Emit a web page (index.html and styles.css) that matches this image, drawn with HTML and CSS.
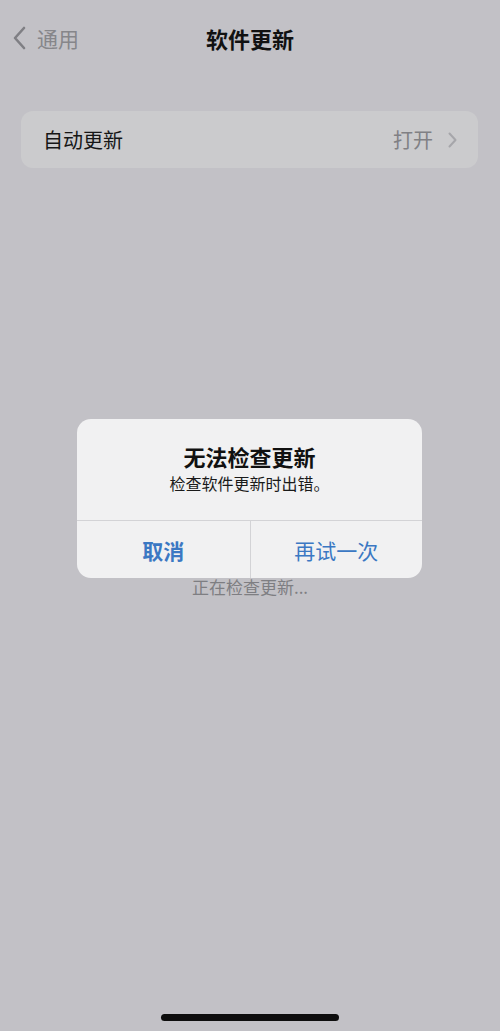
FILE: index.html
```html
<!DOCTYPE html>
<html lang="zh-CN">
<head>
<meta charset="utf-8">
<link rel="stylesheet" href="styles.css">
</head>
<body>
<div class="screen">
  <header class="nav">
    <div class="back">
      <svg class="chev" width="14" height="24" viewBox="0 0 14 24"><path d="M12 2 L3 12 L12 22" fill="none" stroke="#7f7f84" stroke-width="2.6" stroke-linecap="round" stroke-linejoin="round"/></svg>
      <span class="back-text">通用</span>
    </div>
    <div class="title">软件更新</div>
  </header>
  <div class="group">
    <div class="row">
      <span class="row-label">自动更新</span>
      <span class="row-value">打开
        <svg width="9" height="16" viewBox="0 0 9 16"><path d="M1.5 1.5 L7.5 8 L1.5 14.5" fill="none" stroke="#a6a6aa" stroke-width="2" stroke-linecap="round" stroke-linejoin="round"/></svg>
      </span>
    </div>
  </div>
  <div class="status">正在检查更新...</div>
  <div class="alert">
    <div class="alert-body">
      <div class="alert-title">无法检查更新</div>
      <div class="alert-msg">检查软件更新时出错。</div>
    </div>
    <div class="alert-actions">
      <div class="btn">取消</div>
      <div class="btn">再试一次</div>
    </div>
  </div>
  <div class="home"></div>
</div>
</body>
</html>
```
FILE: styles.css
```css
html, body {
  margin: 0;
  padding: 0;
}
body {
  background: #c2c1c6;
  font-family: "Noto Sans CJK SC", "Noto Sans", sans-serif;
}
.screen {
  position: relative;
  width: 500px;
  height: 1031px;
  overflow: hidden;
  background: #c2c1c6;
}
.nav {
  position: relative;
  height: 76px;
  display: flex;
  align-items: center;
  padding-left: 12px;
}
.back {
  display: flex;
  align-items: center;
  gap: 11px;
}
.chev {
  display: block;
}
.back-text {
  font-size: 21px;
  color: #86868a;
  line-height: 1;
}
.title {
  position: absolute;
  left: 0;
  right: 0;
  top: 0;
  height: 76px;
  display: flex;
  align-items: center;
  justify-content: center;
  font-size: 22px;
  font-weight: 700;
  color: #111;
  pointer-events: none;
}
.group {
  margin: 35px 22px 0 21px;
  background: #cbcbcd;
  border-radius: 12px;
}
.row {
  height: 57px;
  display: flex;
  align-items: center;
  justify-content: space-between;
  padding: 0 21px 0 22px;
}
.row-label {
  font-size: 20px;
  color: #161616;
}
.row-value {
  display: flex;
  align-items: center;
  gap: 15px;
  font-size: 20px;
  color: #808084;
}
.status {
  margin-top: 408px;
  text-align: center;
  font-size: 17px;
  color: #7e7e82;
  line-height: 22px;
}
.alert {
  position: absolute;
  left: 77px;
  top: 419px;
  width: 345px;
  background: #f1f1f2;
  border-radius: 14px;
  overflow: hidden;
}
.alert-body {
  height: 102px;
  box-sizing: border-box;
  padding-top: 22px;
  text-align: center;
  border-bottom: 1px solid #d3d3d6;
}
.alert-title {
  font-size: 22px;
  font-weight: 700;
  color: #111;
  line-height: 31px;
}
.alert-msg {
  font-size: 16px;
  color: #1a1a1a;
  line-height: 22px;
  margin-top: 0;
}
.alert-actions {
  display: grid;
  grid-template-columns: 1fr 1fr;
  height: 57px;
}
.btn {
  display: flex;
  align-items: center;
  justify-content: center;
  font-size: 21px;
  color: #3b78c3;
}
.btn + .btn {
  border-left: 1px solid #d3d3d6;
}
.btn:first-child {
  font-weight: 700;
}
.home {
  position: absolute;
  left: 161px;
  top: 1014px;
  width: 178px;
  height: 7px;
  border-radius: 4px;
  background: #0d0d0d;
}
```
